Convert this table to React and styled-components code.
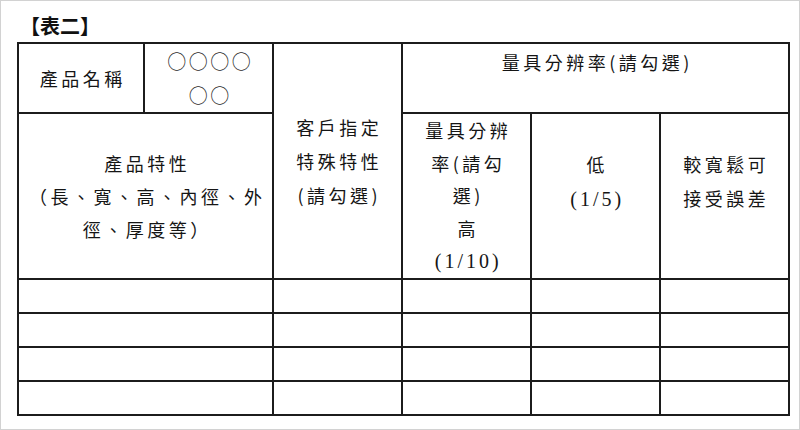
import React from 'react'
import styled, { createGlobalStyle } from 'styled-components';

const GlobalStyle = createGlobalStyle`
    html, body {
        margin: 0;
        padding: 0;
        background: #ffffff;
    }
`

const CJK = `"Noto Sans CJK TC", "Noto Sans CJK SC", sans-serif`
const SERIF = `"Liberation Serif", "Times New Roman", serif`
const LINE = `2px solid #1c1c1c`

const Page = styled.div`
    box-sizing: border-box;
    width: 800px;
    height: 430px;
    border: 1px solid #d2d2d2;
    padding: 12px 11px 0 16px;
    font-family: ${CJK};
    color: #151515;
    overflow: hidden;
`
const Title = styled.h2`
    margin: 0 0 4px 3px;
    font-size: 20px;
    line-height: 25px;
    font-weight: bold;
    color: #111;
`
const Table = styled.table`
    border-collapse: collapse;
    table-layout: fixed;
    width: 771px;
`
const Row = styled.tr`
    height: ${p => p.$h}px;
`
const Cell = styled.td`
    border: ${LINE};
    padding: 0 0 ${p => p.$lift || 0}px 3.5px;
    text-align: center;
    vertical-align: middle;
    font-size: 18px;
    line-height: ${p => p.$lh || 32.5}px;
    letter-spacing: 3.5px;
    font-weight: normal;
`
const Num = styled.span`
    font-family: ${SERIF};
    font-size: 20px;
    letter-spacing: 3px;
`
const Circles = styled.span`
    font-family: ${CJK};
    font-size: 19px;
    letter-spacing: 2.5px;
    color: #2a2a2a;
`

const widths = [126, 129, 129, 129, 129, 129]

function App () {
    return(
        <Page>
            <GlobalStyle />
            <Title>【表二】</Title>
            <Table>
                <colgroup>
                    {widths.map((w, i) => <col key={i} style={{ width: w }} />)}
                </colgroup>
                <tbody>
                    <Row $h={68}>
                        <Cell>產品名稱</Cell>
                        <Cell $lh={33}><Circles>○○○○<br />○○</Circles></Cell>
                        <Cell rowSpan={2} $lh={34}>客戶指定<br />特殊特性<br />(請勾選)</Cell>
                        <Cell colSpan={3} $lift={32}>量具分辨率(請勾選)</Cell>
                    </Row>
                    <Row $h={166}>
                        <Cell colSpan={2} $lh={33}>產品特性<br />（長、寬、高、內徑、外<br />徑、厚度等）</Cell>
                        <Cell>量具分辨<br />率(請勾<br />選)<br />高<br /><Num>(1/10)</Num></Cell>
                        <Cell $lift={30} $lh={34}>低<br /><Num>(1/5)</Num></Cell>
                        <Cell $lift={30} $lh={34}>較寬鬆可<br />接受誤差</Cell>
                    </Row>
                    {[0, 1, 2, 3].map(r => (
                        <Row key={r} $h={34}>
                            <Cell colSpan={2} />
                            <Cell />
                            <Cell />
                            <Cell />
                            <Cell />
                        </Row>
                    ))}
                </tbody>
            </Table>
        </Page>
    )
}

export default App
